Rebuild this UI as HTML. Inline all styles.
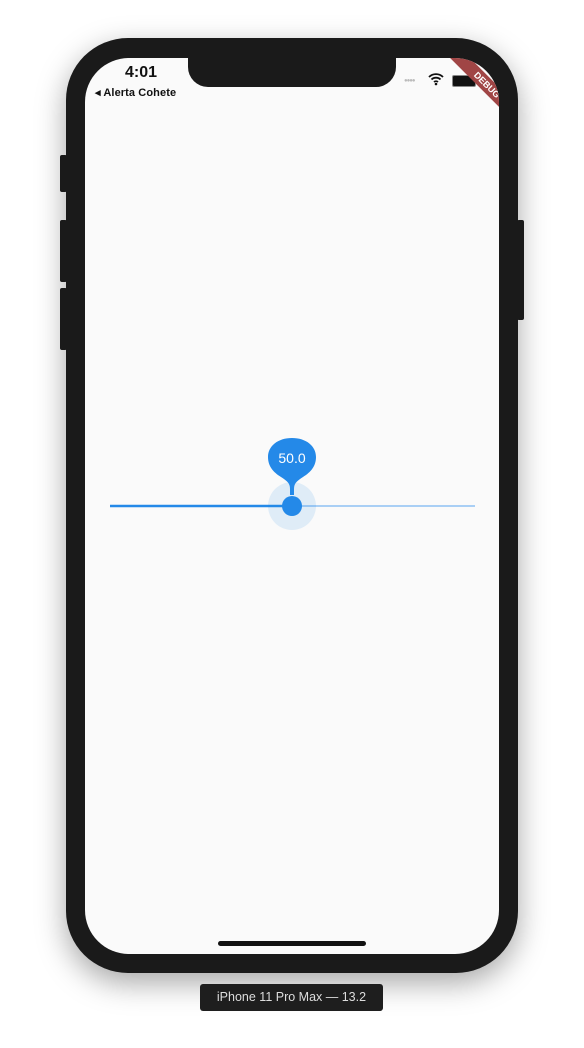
<!DOCTYPE html>
<html><head><style>
body{margin:0;width:584px;height:1048px;background:#fff;position:relative;overflow:hidden;font-family:"Liberation Sans",sans-serif}
.a{position:absolute}
</style></head><body>
<div class="a" style="left:66px;top:38px;width:452px;height:935px;border-radius:62px;background:#1a1a1a;box-shadow:0 10px 30px rgba(0,0,0,0.35)"></div>
<div class="a" style="left:60px;top:155px;width:7px;height:37px;background:#1a1a1a;border-radius:2px"></div>
<div class="a" style="left:60px;top:220px;width:7px;height:62px;background:#1a1a1a;border-radius:2px"></div>
<div class="a" style="left:60px;top:288px;width:7px;height:62px;background:#1a1a1a;border-radius:2px"></div>
<div class="a" style="left:517px;top:220px;width:7px;height:100px;background:#1a1a1a;border-radius:2px"></div>
<div class="a" style="left:85px;top:58px;width:414px;height:896px;border-radius:44px;background:#fafafa;overflow:hidden">
 <div class="a" style="left:103px;top:-10px;width:208px;height:39px;background:#1a1a1a;border-radius:0 0 20px 20px"></div>
 <div class="a" style="left:40px;top:6px;font-size:16px;font-weight:bold;color:#111">4:01</div>
 <div class="a" style="left:10px;top:28px;font-size:11px;color:#111;font-weight:bold;letter-spacing:0.1px">◂ Alerta Cohete</div>
 <div class="a" style="left:319px;top:20px;font-size:6px;color:#bbb;letter-spacing:-1px">●●●●</div>
 <svg class="a" style="left:343px;top:14px" width="16" height="14" viewBox="0 0 16 14"><path d="M1 5a10 10 0 0 1 14 0M3.5 7.5a6.5 6.5 0 0 1 9 0M6 10a3 3 0 0 1 4 0" stroke="#111" stroke-width="1.8" fill="none"/><circle cx="8" cy="12" r="1.3" fill="#111"/></svg>
 <div class="a" style="left:367px;top:17px;width:22px;height:10px;background:#111;border:1px solid #888;border-radius:2px"></div>
 <div class="a" style="left:352px;top:20px;width:100px;height:14px;background:#a04545;transform:rotate(45deg);color:#fff;font-size:9px;font-weight:bold;text-align:center;line-height:14px">DEBUG</div>
 <div class="a" style="left:133px;top:883px;width:148px;height:5px;background:#111;border-radius:3px"></div>
</div>
<svg class="a" style="left:0;top:0" width="584" height="1048">
 <line x1="292" y1="506" x2="475" y2="506" stroke="#a9cff5" stroke-width="2"/>
 <line x1="110" y1="506" x2="292" y2="506" stroke="#2489e8" stroke-width="2.5"/>
 <circle cx="292" cy="506" r="24" fill="#2489e8" opacity="0.12"/>
 <path d="M292 438c14 0 24 8 24 19c0 9-5 15-13 20c-6 4-9 6-9 12v6h-4v-6c0-6-3-8-9-12c-8-5-13-11-13-20c0-11 10-19 24-19z" fill="#2489e8"/>
 <circle cx="292" cy="506" r="10" fill="#2489e8"/>
 <text x="292" y="463" font-family="Liberation Sans" font-size="14" fill="#fff" text-anchor="middle">50.0</text>
</svg>
<div class="a" style="left:200px;top:984px;width:183px;height:27px;background:#1e1e1e;border-radius:3px;color:#ddd;font-size:12.5px;text-align:center;line-height:27px">iPhone 11 Pro Max — 13.2</div>
</body></html>
